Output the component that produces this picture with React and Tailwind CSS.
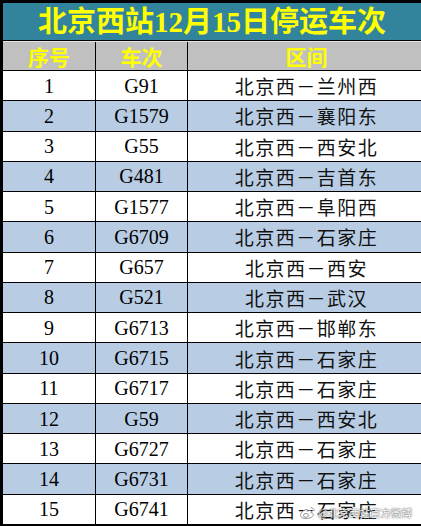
import React from "react";

const rows = [
  ["1", "G91", "北京西－兰州西"],
  ["2", "G1579", "北京西－襄阳东"],
  ["3", "G55", "北京西－西安北"],
  ["4", "G481", "北京西－吉首东"],
  ["5", "G1577", "北京西－阜阳西"],
  ["6", "G6709", "北京西－石家庄"],
  ["7", "G657", "北京西－西安"],
  ["8", "G521", "北京西－武汉"],
  ["9", "G6713", "北京西－邯郸东"],
  ["10", "G6715", "北京西－石家庄"],
  ["11", "G6717", "北京西－石家庄"],
  ["12", "G59", "北京西－西安北"],
  ["13", "G6727", "北京西－石家庄"],
  ["14", "G6731", "北京西－石家庄"],
  ["15", "G6741", "北京西－石家庄"],
];

const serif = "font-['Liberation_Serif','Noto_Sans_CJK_SC',serif]";
const cjk = "font-['Noto_Sans_CJK_SC',sans-serif]";

export default function App() {
  return (
    <div className="relative w-[421px] h-[526px] bg-white overflow-hidden">
      <div className="flex flex-col h-[526px] border-l-[3px] border-t-[3px] border-b-[2px] border-black">
        <div className={`h-[38px] shrink-0 flex items-center justify-center bg-[#31849b] border-b border-black text-[#ffff00] text-[29px] font-bold leading-none pt-[2px] ${serif}`}>
          北京西站12月15日停运车次
        </div>
        <div className={`h-[30px] shrink-0 grid grid-cols-[93px_92px_1fr] bg-[#c0c0c0] border-t border-[#e4e4e4] border-b border-b-black text-[#ffff00] text-[21px] font-bold leading-none ${cjk}`}>
          <div className="flex items-center justify-center border-r border-black">序号</div>
          <div className="flex items-center justify-center border-r border-black">车次</div>
          <div className="flex items-center justify-center pl-[4px]">区间</div>
        </div>
        <div className="flex-1 flex flex-col">
          {rows.map((r, i) => (
            <div
              key={r[0]}
              className={`flex-1 grid grid-cols-[93px_92px_1fr] text-black ${i % 2 === 1 ? "bg-[#b8cce4]" : "bg-white"} ${i < rows.length - 1 ? "border-b border-black" : ""}`}
            >
              <div className={`flex items-center justify-center border-r border-black text-[20px] leading-none ${serif}`}>{r[0]}</div>
              <div className={`flex items-center justify-center border-r border-black text-[20px] leading-none ${serif}`}>{r[1]}</div>
              <div className={`flex items-center justify-center pl-[4px] text-[19px] tracking-[1.5px] leading-none text-[#111] ${cjk}`}>{r[2]}</div>
            </div>
          ))}
        </div>
      </div>

      <div className="absolute left-[299px] top-[506px] flex items-center gap-[2px] opacity-90">
        <svg width="17" height="14" viewBox="0 0 17 14" fill="none">
          <path d="M7 3.5C3.8 4.6 1.2 7.2 1.5 9.4C1.9 11.9 5.4 13 8.6 12.5C12.2 12 14.6 10.2 14.3 8.3C14.1 7.1 12.8 6.8 11.9 6.9C12.5 5.6 12.2 4.2 10.6 4.4C9.6 4.5 8.6 5.3 8.6 5.3C8.9 4 8.6 3 7 3.5Z" fill="white" stroke="#8a8a8a" strokeWidth="1" />
          <ellipse cx="7" cy="9.4" rx="2.6" ry="1.9" stroke="#8a8a8a" strokeWidth="1" />
          <path d="M12.2 1.6C13.8 1.8 15.2 3.2 15.3 4.8" stroke="#8a8a8a" strokeWidth="1" strokeLinecap="round" />
        </svg>
        <span className={`text-[10.5px] leading-none whitespace-nowrap text-white [text-shadow:0_0_2px_#555,0_0_1px_#555] ${cjk}`}>@北京西站官方微博</span>
      </div>
    </div>
  );
}
